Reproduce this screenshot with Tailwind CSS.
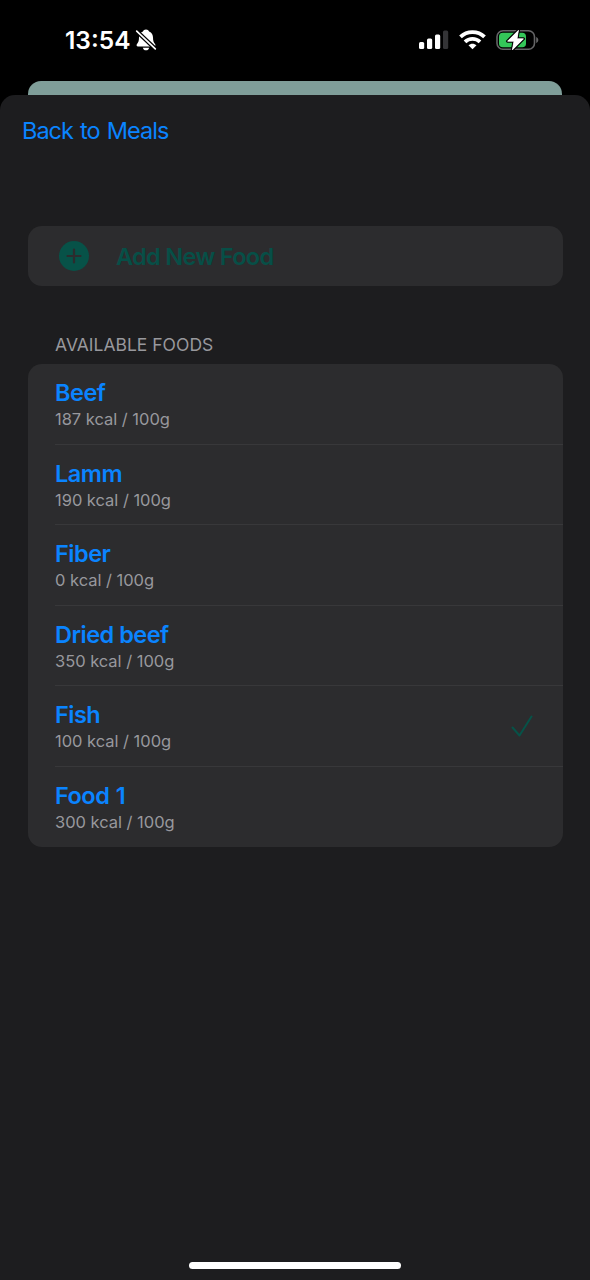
<!DOCTYPE html>
<html lang="en">
<head>
<meta charset="utf-8">
<title>Foods</title>
<script src="https://cdn.jsdelivr.net/npm/@tailwindcss/browser@4"></script>
</head>
<body class="bg-black">
<div class="w-[590px] h-[1280px] flex flex-col overflow-hidden bg-black font-['Inter',sans-serif]">
  <header class="h-[81px] shrink-0 flex items-start justify-between pl-[65px] pr-[51px] pt-[25px]">
    <div class="flex items-center h-[30px]">
      <span class="w-[70px] text-[24.500px] leading-[30px] font-semibold text-white whitespace-nowrap">13:54</span>
      <svg class="w-[22px] h-[24px]" viewBox="0 0 22 24">
        <path d="M11 1.500C12.600 1.500 13.600 2.300 14.100 3.400C16.900 4.500 18 6.700 18 9.600C18 13.300 18.700 14.400 20 15.900C20.800 17 20.400 18.500 19 18.500H3C1.600 18.500 1.200 17 2 15.900C3.300 14.400 4 13.300 4 9.600C4 6.700 5.100 4.500 7.900 3.400C8.400 2.300 9.400 1.500 11 1.500Z" fill="#fff"/>
        <path d="M7.800 19.700H14.200C13.800 21.400 12.600 22.300 11 22.300S8.200 21.400 7.800 19.700Z" fill="#fff"/>
        <path d="M1 2.500L21 21.500" stroke="#000" stroke-width="4.200"/>
        <path d="M1.700 3.200L20.300 20.900" stroke="#fff" stroke-width="1.700" stroke-linecap="round"/>
      </svg>
    </div>
    <div class="flex items-center h-[30px]">
      <svg class="w-[30px] h-[20px]" viewBox="0 0 30 20" fill="#fff">
        <rect x="0" y="12" width="5.2" height="7" rx="1.5"/>
        <rect x="8" y="8.5" width="5.2" height="10.5" rx="1.5"/>
        <rect x="16" y="4.500" width="5.2" height="14.500" rx="1.500"/>
        <rect x="24" y="0.500" width="5.200" height="18.500" rx="1.500" fill="#343436"/>
      </svg>
      <svg class="w-[27px] h-[20px] ml-[10px]" viewBox="0 0 27 20" fill="none" stroke="#fff" stroke-width="3.8">
        <path d="M1.500 6.900C8 0.500 19 0.500 25.500 6.900"/>
        <path d="M6 11.800C10.200 7.800 16.800 7.800 21 11.800"/>
        <path d="M9.500 15.300C11.700 13.200 15.300 13.200 17.500 15.300L13.500 19.300Z" fill="#fff" stroke="none"/>
      </svg>
      <svg class="w-[43px] h-[24px] ml-[10px]" viewBox="0 0 43 24">
        <rect x="1" y="2.700" width="37.500" height="18.600" rx="6" fill="none" stroke="#656567" stroke-width="1.600"/>
        <path d="M40.200 9V15C41.500 14.500 42.300 13.400 42.300 12S41.500 9.500 40.200 9Z" fill="#656567"/>
        <rect x="3" y="4.800" width="27" height="14.400" rx="3.800" fill="#34c759"/>
        <path d="M22.500 2.200L11.500 13.200H18L16.300 22L27.500 10.800H21Z" fill="#fff" stroke="#000" stroke-width="3" stroke-linejoin="round" paint-order="stroke"/>
        <path d="M22.500 2.200L11.500 13.200H18L16.300 22L27.500 10.800H21Z" fill="#fff" stroke="#fff" stroke-width="0.600" stroke-linejoin="round"/>
      </svg>
    </div>
  </header>
  <div class="h-[14px] shrink-0 mx-[28px] rounded-t-[13px] bg-[#7f9e99]"></div>
  <main class="h-[1185px] shrink-0 rounded-t-[15px] bg-[#1d1d1f] flex flex-col px-[27.500px]">
    <button class="self-start -ml-[5.500px] mt-[21px] h-[30px] text-[23.500px] leading-[30px] tracking-[-0.980px] [word-spacing:1.500px] text-[#0a84ff] whitespace-nowrap">Back to Meals</button>
    <button class="mt-[80px] h-[60px] shrink-0 rounded-[14px] bg-[#2c2c2e] flex items-center pl-[31.500px] text-[#074f47]">
      <svg class="w-[30px] h-[30px]" viewBox="0 0 30 30">
        <circle cx="15" cy="15" r="15" fill="#075248"/>
        <path d="M15 8.500V21.500M8.500 15H21.500" stroke="#2c2c2e" stroke-width="2.200" stroke-linecap="round"/>
      </svg>
      <span class="ml-[27px] pt-[2px] text-[23.500px] leading-[30px] tracking-[-0.660px] font-semibold whitespace-nowrap">Add New Food</span>
    </button>
    <h2 class="mt-[49px] ml-[27.500px] h-[20px] text-[17.500px] leading-[20px] text-[#98989d] whitespace-nowrap">AVAILABLE FOODS</h2>
    <ul class="mt-[9px] h-[483px] rounded-[14px] bg-[#2c2c2e] flex flex-col pl-[27.500px] tracking-[-0.030px]">
      <li class="h-[80.500px] pt-[15px] border-b border-[#38383a]"><div class="text-[23.500px] leading-[28px] tracking-[-0.500px] font-semibold text-[#0a84ff]"><span>Beef</span></div><div class="text-[16.500px] leading-[25px] text-[#98989d]"><span>187 kcal / 100g</span></div></li>
      <li class="h-[80.500px] pt-[15px] border-b border-[#38383a]"><div class="text-[23.500px] leading-[28px] tracking-[-0.500px] font-semibold text-[#0a84ff]"><span>Lamm</span></div><div class="text-[16.500px] leading-[25px] text-[#98989d]"><span>190 kcal / 100g</span></div></li>
      <li class="h-[80.500px] pt-[15px] border-b border-[#38383a]"><div class="text-[23.500px] leading-[28px] tracking-[-0.500px] font-semibold text-[#0a84ff]"><span>Fiber</span></div><div class="text-[16.500px] leading-[25px] text-[#98989d]"><span>0 kcal / 100g</span></div></li>
      <li class="h-[80.500px] pt-[15px] border-b border-[#38383a]"><div class="text-[23.500px] leading-[28px] tracking-[-0.500px] font-semibold text-[#0a84ff]"><span>Dried beef</span></div><div class="text-[16.500px] leading-[25px] text-[#98989d]"><span>350 kcal / 100g</span></div></li>
      <li class="h-[80.500px] pt-[15px] border-b border-[#38383a] flex justify-between pr-[29.500px]">
        <div><div class="text-[23.500px] leading-[28px] tracking-[-0.500px] font-semibold text-[#0a84ff]"><span>Fish</span></div><div class="text-[16.500px] leading-[25px] text-[#98989d]"><span>100 kcal / 100g</span></div></div>
        <svg class="w-[22px] h-[22px] mt-[14px]" viewBox="0 0 22 22" fill="none" stroke="#075248" stroke-width="2" stroke-linecap="round" stroke-linejoin="round"><path d="M1.500 12.500L8.500 20.500L20.500 1.500"/></svg>
      </li>
      <li class="h-[80.500px] pt-[15px]"><div class="text-[23.500px] leading-[28px] tracking-[-0.500px] [word-spacing:1px] font-semibold text-[#0a84ff]"><span>Food 1</span></div><div class="text-[16.500px] leading-[25px] text-[#98989d]"><span>300 kcal / 100g</span></div></li>
    </ul>
    <div class="mt-auto mb-[11px] self-center w-[212px] h-[7px] rounded-full bg-white"></div>
  </main>
</div>
</body>
</html>
